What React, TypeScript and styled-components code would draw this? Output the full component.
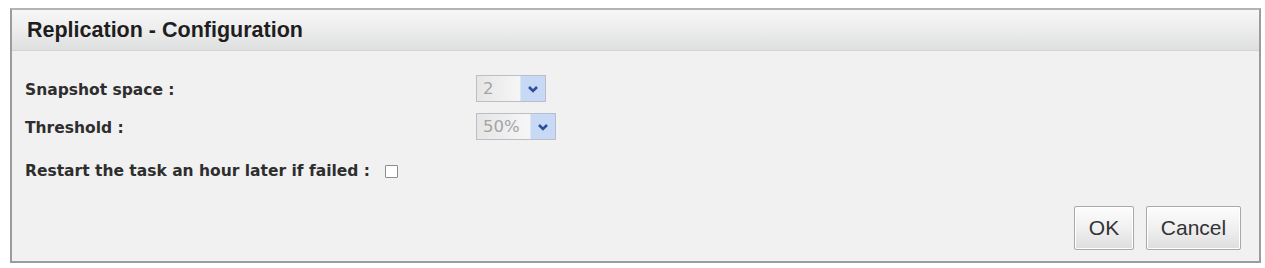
import React from "react";
import styled, { createGlobalStyle } from "styled-components";

const GlobalStyle = createGlobalStyle`
    html, body { margin: 0; padding: 0; background: #ffffff; }
`

const Page = styled.div`
    padding: 8px 4px 5px 10px;
    width: 1265px;
    box-sizing: border-box;
`

const Panel = styled.div`
    border: 2px solid #9c9c9c;
    border-top-color: #b4b4b4;
    background: #f1f1f1;
    height: 255px;
    box-sizing: border-box;
    display: flex;
    flex-direction: column;
`

const Header = styled.div`
    height: 41px;
    box-sizing: border-box;
    padding: 0 0 0 15px;
    display: flex;
    align-items: center;
    background: linear-gradient(#f7f7f7 0%, #eeeeee 45%, #dedfdf 100%);
    border-bottom: 1px solid #d4d4d4;
    font-family: "Liberation Sans", Arial, sans-serif;
    font-weight: bold;
    font-size: 21.5px;
    color: #1e1e1e;
`

const Body = styled.div`
    flex: 1;
    padding: 21px 18px 0 13px;
    display: flex;
    flex-direction: column;
`

const Row = styled.div<{ $h: number }>`
    display: flex;
    align-items: center;
    height: ${p => p.$h}px;
`

const Label = styled.div<{ $w?: number }>`
    width: ${p => (p.$w ? p.$w + "px" : "auto")};
    font-family: "DejaVu Sans", Verdana, sans-serif;
    font-weight: bold;
    font-size: 15.5px;
    color: #2e2e2e;
    white-space: nowrap;
`

const Select = styled.div<{ $w: number }>`
    width: ${p => p.$w}px;
    height: 27px;
    margin-top: -3px;
    box-sizing: border-box;
    border: 1px solid #b9bfc9;
    background: #ececec;
    display: flex;
    align-items: stretch;
    .val{
        flex: 1;
        display: flex;
        align-items: center;
        padding-left: 6px;
        font-family: "DejaVu Sans", Verdana, sans-serif;
        font-size: 16.5px;
        color: #a4a4a4;
        background: linear-gradient(90deg, #e6e6e6, #f6f6f6);
    }
    .arrow{
        width: 24px;
        display: flex;
        align-items: center;
        justify-content: center;
        background: #c7d9f5;
        border-left: 1px solid #dce5f3;
    }
`

const Check = styled.span`
    display: inline-block;
    width: 13px;
    height: 13px;
    margin-left: 15px;
    box-sizing: border-box;
    border: 1px solid #8c8c8c;
    background: #ffffff;
    border-radius: 1px;
`

const Footer = styled.div`
    display: flex;
    justify-content: flex-end;
    gap: 12px;
    margin-top: 12px;
`

const Button = styled.button<{ $w: number }>`
    width: ${p => p.$w}px;
    height: 44px;
    border: 1px solid #a9a9a9;
    border-radius: 2px;
    background: linear-gradient(#fdfdfd 0%, #f0f0f0 50%, #dedede 100%);
    box-shadow: inset 0 0 0 1px #ffffff;
    font-family: "Liberation Sans", Arial, sans-serif;
    font-size: 21px;
    color: #333;
    padding: 0;
`

const Chevron = () => (
    <svg width="12" height="8" viewBox="0 0 12 8">
        <path d="M2 2 L6 6 L10 2" fill="none" stroke="#2b4f9a" strokeWidth="2.6" />
    </svg>
)

const fields = [
    { id: "snap", label: "Snapshot space :", value: "2", w: 70, h: 36 },
    { id: "th", label: "Threshold :", value: "50%", w: 80, h: 40 },
]

export default () => {
    return (
        <Page>
            <GlobalStyle />
            <Panel>
                <Header>Replication - Configuration</Header>
                <Body>
                    {
                        fields.map(f => (
                            <Row key={f.id} $h={f.h}>
                                <Label $w={451}>{f.label}</Label>
                                <Select $w={f.w}>
                                    <div className="val">{f.value}</div>
                                    <div className="arrow"><Chevron /></div>
                                </Select>
                            </Row>
                        ))
                    }
                    <Row $h={46}>
                        <Label>Restart the task an hour later if failed :</Label>
                        <Check />
                    </Row>
                    <Footer>
                        <Button $w={60}>OK</Button>
                        <Button $w={95}>Cancel</Button>
                    </Footer>
                </Body>
            </Panel>
        </Page>
    )
}
